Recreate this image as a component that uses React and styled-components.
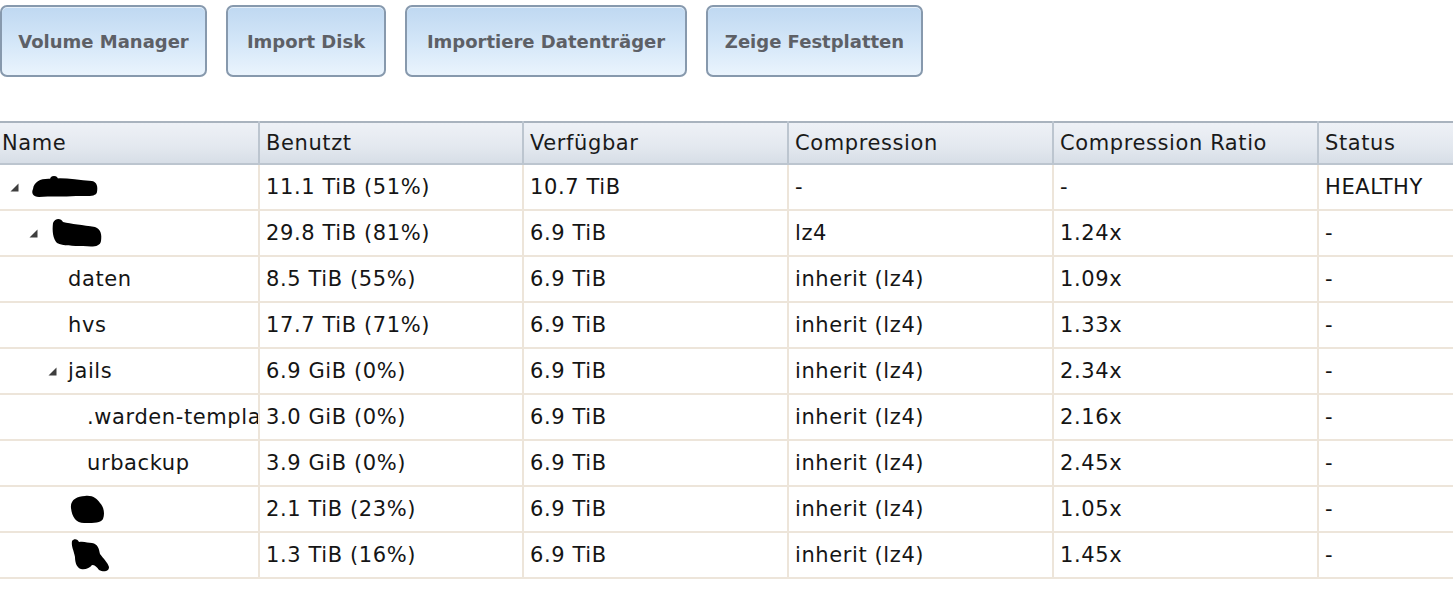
import React from "react";
import styled, { createGlobalStyle } from "styled-components";

const GlobalStyle = createGlobalStyle`
  html, body {
    margin: 0;
    padding: 0;
    background: #ffffff;
    overflow: hidden;
  }
  body {
    font-family: "DejaVu Sans", Verdana, sans-serif;
  }
`;

const buttons = [
  { label: "Volume Manager", width: 207 },
  { label: "Import Disk", width: 160 },
  { label: "Importiere Datenträger", width: 282 },
  { label: "Zeige Festplatten", width: 217 },
];

const rows = [
  { level: 0, open: true, blot: "a", used: "11.1 TiB (51%)", avail: "10.7 TiB", comp: "-", ratio: "-", status: "HEALTHY" },
  { level: 1, open: true, blot: "b", used: "29.8 TiB (81%)", avail: "6.9 TiB", comp: "lz4", ratio: "1.24x", status: "-" },
  { level: 2, name: "daten", used: "8.5 TiB (55%)", avail: "6.9 TiB", comp: "inherit (lz4)", ratio: "1.09x", status: "-" },
  { level: 2, name: "hvs", used: "17.7 TiB (71%)", avail: "6.9 TiB", comp: "inherit (lz4)", ratio: "1.33x", status: "-" },
  { level: 2, open: true, name: "jails", used: "6.9 GiB (0%)", avail: "6.9 TiB", comp: "inherit (lz4)", ratio: "2.34x", status: "-" },
  { level: 3, name: ".warden-templa", used: "3.0 GiB (0%)", avail: "6.9 TiB", comp: "inherit (lz4)", ratio: "2.16x", status: "-" },
  { level: 3, name: "urbackup", used: "3.9 GiB (0%)", avail: "6.9 TiB", comp: "inherit (lz4)", ratio: "2.45x", status: "-" },
  { level: 2, blot: "c", used: "2.1 TiB (23%)", avail: "6.9 TiB", comp: "inherit (lz4)", ratio: "1.05x", status: "-" },
  { level: 2, blot: "d", used: "1.3 TiB (16%)", avail: "6.9 TiB", comp: "inherit (lz4)", ratio: "1.45x", status: "-" },
];

function Expander() {
  return (
    <Arrow width="9" height="9" viewBox="0 0 9 9">
      <polygon points="8.5,0.5 8.5,8.5 0.5,8.5" fill="#3e3e3e" />
    </Arrow>
  );
}

// redacted names (black marker scribbles in the screenshot)
function Blot({ kind }) {
  if (kind === "a") {
    return (
      <svg width="70" height="26" viewBox="0 0 70 26">
        <path
          d="M3 15 C4 7 12 4 22 5 C32 3 46 6 62 7 C67 8 68 13 67 18 C66 23 58 22 46 22 C34 23 20 22 9 23 C3 23 1 19 3 15 Z"
          fill="#000"
        />
        <circle cx="24" cy="6" r="4" fill="#000" />
      </svg>
    );
  }
  if (kind === "b") {
    return (
      <svg width="54" height="32" viewBox="0 0 54 32">
        <path
          d="M4 6 C6 1 12 1 14 5 C22 7 34 8 46 10 C52 12 53 18 52 24 C51 30 44 30 34 29 C24 29 14 29 8 26 C4 22 3 14 4 6 Z"
          fill="#000"
        />
      </svg>
    );
  }
  if (kind === "c") {
    return (
      <svg width="38" height="31" viewBox="0 0 38 31">
        <path
          d="M3 14 C2 6 9 2 17 2 C25 1 29 5 32 9 C36 13 37 20 35 25 C33 29 26 29 18 29 C9 30 4 24 3 14 Z"
          fill="#000"
        />
      </svg>
    );
  }
  return (
    <svg width="44" height="36" viewBox="0 0 44 36">
      <path
        d="M4 4 C6 1 10 2 11 5 C16 4 20 6 24 6 C30 7 31 12 32 17 C35 21 40 26 41 30 C41 35 35 35 31 33 C29 30 27 28 24 28 C22 31 17 33 13 32 C9 31 7 26 7 20 C6 14 3 9 4 4 Z"
        fill="#000"
      />
    </svg>
  );
}

export default function App() {
  return (
    <Page>
      <GlobalStyle />
      <Toolbar>
        {buttons.map((b) => (
          <Button key={b.label} $w={b.width}>
            {b.label}
          </Button>
        ))}
      </Toolbar>
      <Grid>
        <colgroup>
          <col style={{ width: 259 }} />
          <col style={{ width: 264 }} />
          <col style={{ width: 265 }} />
          <col style={{ width: 265 }} />
          <col style={{ width: 265 }} />
          <col style={{ width: 265 }} />
        </colgroup>
        <thead>
          <tr>
            <Th $first>Name</Th>
            <Th>Benutzt</Th>
            <Th>Verfügbar</Th>
            <Th>Compression</Th>
            <Th>Compression Ratio</Th>
            <Th>Status</Th>
          </tr>
        </thead>
        <tbody>
          {rows.map((r, i) => (
            <tr key={i}>
              <NameCell>
                <Tree $level={r.level}>
                  <Toggle>{r.open && <Expander />}</Toggle>
                  {r.blot ? <Blot kind={r.blot} /> : <Label>{r.name}</Label>}
                </Tree>
              </NameCell>
              <Td>{r.used}</Td>
              <Td>{r.avail}</Td>
              <Td>{r.comp}</Td>
              <Td>{r.ratio}</Td>
              <Td>{r.status}</Td>
            </tr>
          ))}
        </tbody>
      </Grid>
    </Page>
  );
}

const Page = styled.div`
  width: 1453px;
  height: 601px;
  overflow: hidden;
  padding-top: 5px;
  box-sizing: border-box;
`;

const Toolbar = styled.div`
  display: flex;
  gap: 19px;
  height: 72px;
  margin-bottom: 44px;
`;

const Button = styled.button`
  width: ${(p) => p.$w}px;
  height: 72px;
  padding: 0;
  border: 2px solid #8799ad;
  border-radius: 7px;
  background: linear-gradient(to bottom, #bfd8f1 0%, #d3e6f8 50%, #eaf4fd 100%);
  box-shadow: inset 0 1px 0 rgba(255, 255, 255, 0.6);
  font-family: "DejaVu Sans", Verdana, sans-serif;
  font-weight: bold;
  font-size: 18px;
  color: #5d6066;
  white-space: nowrap;
  cursor: pointer;
`;

const Grid = styled.table`
  border-collapse: collapse;
  table-layout: fixed;
  width: 1583px;
  font-size: 21px;
  line-height: 24px;
  letter-spacing: 0.6px;
  color: #151515;
`;

const Th = styled.th`
  height: 40px;
  padding: 0 0 0 ${(p) => (p.$first ? "2px" : "6px")};
  text-align: left;
  font-weight: normal;
  color: #1a1a1a;
  background: linear-gradient(to bottom, #eef1f6 0%, #e3e8ef 60%, #d7dee7 100%);
  border-top: 2px solid #a9b3be;
  border-bottom: 2px solid #bcc5cf;
  border-right: 2px solid #bcc5cf;
  white-space: nowrap;
  overflow: hidden;
`;

const Td = styled.td`
  height: 44px;
  padding: 0 0 0 6px;
  border-bottom: 2px solid #ede5da;
  border-right: 2px solid #ede5da;
  white-space: nowrap;
  overflow: hidden;
  vertical-align: middle;
`;

const NameCell = styled(Td)`
  padding: 0;
`;

const Tree = styled.div`
  display: flex;
  align-items: center;
  padding-left: ${(p) => 10 + p.$level * 19}px;
  height: 44px;
  overflow: hidden;
`;

const Toggle = styled.span`
  width: 20px;
  flex: none;
  display: flex;
  align-items: center;
`;

const Label = styled.span`
  white-space: nowrap;
`;

const Arrow = styled.svg`
  display: block;
`;
